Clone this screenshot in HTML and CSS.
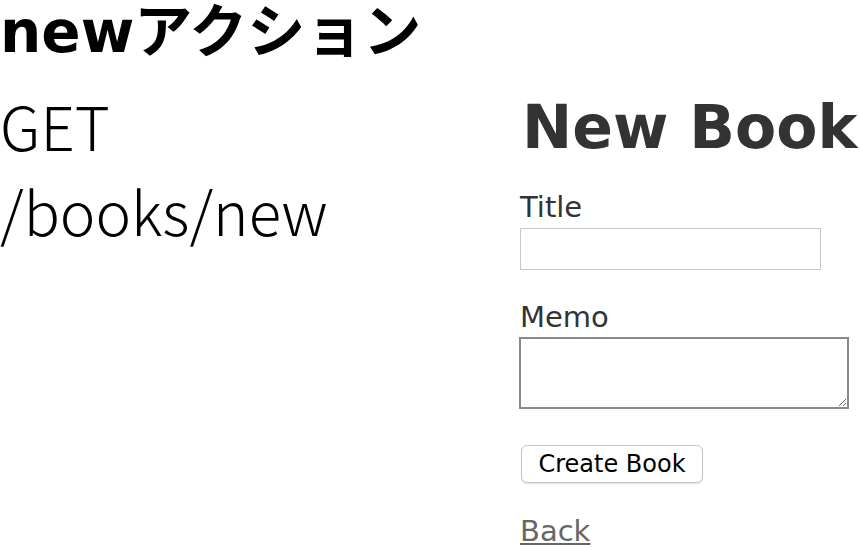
FILE: index.html
```html
<!DOCTYPE html>
<html lang="ja">
<head>
<meta charset="utf-8">
<title>newアクション</title>
<link rel="stylesheet" href="styles.css">
</head>
<body>
<div class="slide">
  <h1 class="slide-title">newアクション</h1>
  <div class="row">
    <div class="route">
      <p class="route-line">GET</p>
      <p class="route-line">/books/new</p>
    </div>
    <div class="shot">
      <h2 class="shot-title">New Book</h2>
      <form class="book-form">
        <label class="field-label">Title</label>
        <input class="text-input" type="text">
        <label class="field-label memo-label">Memo</label>
        <textarea class="text-area"></textarea>
        <button class="submit" type="button">Create Book</button>
      </form>
      <a class="back" href="#">Back</a>
    </div>
  </div>
</div>
</body>
</html>
```

FILE: styles.css
```css
html, body {
  margin: 0;
  padding: 0;
  background: #fff;
}
.slide {
  width: 860px;
  height: 547px;
  overflow: hidden;
  display: flex;
  flex-direction: column;
}
.slide-title {
  margin: 0;
  font-family: "DejaVu Sans", "Noto Sans CJK JP", sans-serif;
  font-weight: 700;
  font-size: 58px;
  line-height: 64px;
  color: #000;
  white-space: nowrap;
}
.row {
  display: flex;
  margin-top: 18px;
}
.route {
  width: 520px;
  flex-shrink: 0;
}
.route-line {
  margin: 0;
  font-family: "Noto Sans CJK JP", sans-serif;
  font-weight: 300;
  font-size: 60px;
  line-height: 85px;
  color: #000;
}
.shot {
  display: flex;
  flex-direction: column;
  align-items: flex-start;
  font-family: "DejaVu Sans", Verdana, sans-serif;
  color: #333;
}
.shot-title {
  margin: 10px 0 0 2px;
  font-family: "DejaVu Sans", Verdana, sans-serif;
  font-weight: 700;
  font-size: 60px;
  line-height: 70px;
  white-space: nowrap;
  color: #333;
}
.book-form {
  display: flex;
  flex-direction: column;
  align-items: flex-start;
  margin-top: 28px;
}
.field-label {
  display: block;
  font-size: 29px;
  line-height: 34px;
}
.memo-label {
  margin-top: 30px;
}
.text-input {
  box-sizing: border-box;
  margin: 4px 0 0 0;
  width: 301px;
  height: 42px;
  border: 1.5px solid #c8c8c8;
  background: #fff;
  padding: 0;
}
.text-area {
  box-sizing: border-box;
  margin: 3px 0 0 -1px;
  width: 330px;
  height: 72px;
  border: 2px solid #8a8a8a;
  background: #fff;
  padding: 0;
  resize: both;
}
.submit {
  box-sizing: border-box;
  margin: 36px 0 0 1px;
  width: 182px;
  height: 38px;
  border: 1px solid #c6c6c6;
  border-radius: 6px;
  background: #fff;
  box-shadow: 0 1px 1px rgba(0,0,0,0.12);
  font-family: "DejaVu Sans", Verdana, sans-serif;
  font-size: 24px;
  color: #000;
  padding: 0;
}
.back {
  margin-top: 31px;
  font-size: 29px;
  line-height: 34px;
  color: #666;
  text-decoration: underline;
}
```
